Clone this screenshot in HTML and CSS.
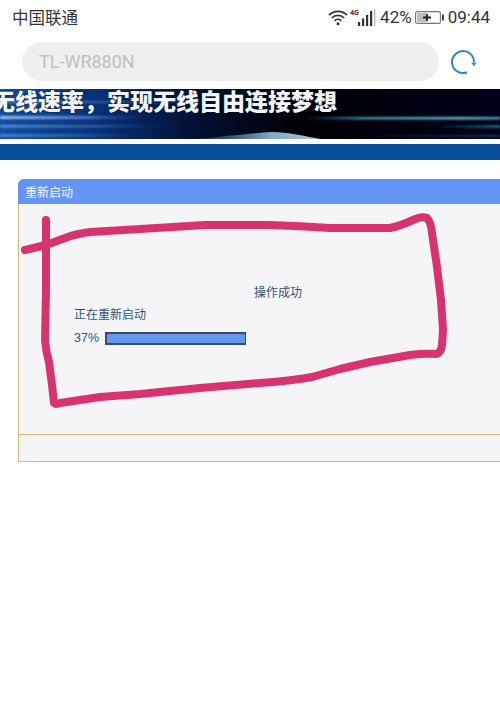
FILE: index.html

```html
<!DOCTYPE html>
<html lang="zh-CN">
<head>
  <meta charset="UTF-8" />
  <meta name="viewport" content="width=device-width, initial-scale=1.0"/>
  <title>重新启动</title>
  <link rel="stylesheet" href="styles.css">
</head>
<body>
  <div class="status-bar">
    <span class="carrier">中国联通</span>
    <div class="status-right">
      <svg class="wifi" width="20" height="17" viewBox="0 0 20 17" fill="none" stroke="#333" stroke-width="1.7">
        <path d="M1 6.2C6 1.2 14 1.2 19 6.2"/>
        <path d="M3.8 9C7.3 5.6 12.7 5.6 16.2 9"/>
        <path d="M6.6 11.8C8.5 10 11.5 10 13.4 11.8"/>
        <circle cx="10" cy="14.8" r="1.5" fill="#333" stroke="none"/>
      </svg>
      <svg class="signal" width="26" height="19" viewBox="0 0 26 19">
        <text x="0" y="6.5" class="signal-label">4G</text>
        <rect x="8" y="14" width="2.2" height="4" fill="#333"/>
        <rect x="12" y="10.5" width="2.2" height="7.5" fill="#333"/>
        <rect x="16" y="7" width="2.2" height="11" fill="#333"/>
        <rect x="20" y="3" width="2.2" height="15" fill="#333"/>
        <rect x="24" y="1" width="1.4" height="17" fill="#bbb"/>
      </svg>
      <span class="percent">42%</span>
      <svg class="battery" width="29" height="15" viewBox="0 0 29 15">
        <rect x="0.6" y="1.6" width="24.8" height="11.8" rx="1.5" fill="#fff" stroke="#777" stroke-width="1.1"/>
        <rect x="2" y="3" width="10" height="9" fill="#bdbdbd"/>
        <path d="M8 7.5H16M12 4V11" stroke="#222" stroke-width="1.8"/>
        <rect x="27" y="4.5" width="1.8" height="6" fill="#333"/>
      </svg>
      <span class="clock">09:44</span>
    </div>
  </div>

  <div class="address-row">
    <div class="address-box">TL-WR880N</div>
    <svg class="reload" width="28" height="28" viewBox="0 0 28 28" fill="none">
      <path d="M18 24.3A11 11 0 1 1 25 14" stroke="#2f86c8" stroke-width="2"/>
      <path d="M22.4 14.4H27.4L24.8 18.6Z" fill="#2f86c8"/>
    </svg>
  </div>

  <div class="banner">
    <svg class="banner-art" width="500" height="50" viewBox="0 0 500 50" preserveAspectRatio="none">
      <defs>
        <linearGradient id="banner-bg" x1="0" x2="1" y1="0" y2="0">
          <stop offset="0" stop-color="#0d4ea6"/>
          <stop offset="0.2" stop-color="#072f74"/>
          <stop offset="0.4" stop-color="#020f30"/>
          <stop offset="0.6" stop-color="#000006"/>
          <stop offset="1" stop-color="#00001a"/>
        </linearGradient>
        <linearGradient id="streak-left" x1="0" x2="1" y1="0" y2="0">
          <stop offset="0" stop-color="#a4c6ee"/>
          <stop offset="0.6" stop-color="#3f78c4"/>
          <stop offset="1" stop-color="#0a2a66" stop-opacity="0"/>
        </linearGradient>
        <linearGradient id="streak-right" x1="0" x2="1" y1="0" y2="0">
          <stop offset="0" stop-color="#1d5a78" stop-opacity="0"/>
          <stop offset="0.3" stop-color="#3f93ae"/>
          <stop offset="0.8" stop-color="#6fc6dc"/>
          <stop offset="1" stop-color="#4ea6c0"/>
        </linearGradient>
        <linearGradient id="streak-dim" x1="0" x2="1" y1="0" y2="0">
          <stop offset="0" stop-color="#17505f" stop-opacity="0"/>
          <stop offset="1" stop-color="#1e6a7c"/>
        </linearGradient>
        <linearGradient id="mound" x1="0" x2="1" y1="0" y2="0">
          <stop offset="0" stop-color="#4d7f9c" stop-opacity="0.15"/>
          <stop offset="0.6" stop-color="#7fa9c0"/>
          <stop offset="1" stop-color="#a8c8d8"/>
        </linearGradient>
        <filter id="soft"><feGaussianBlur stdDeviation="1.1"/></filter>
      </defs>
      <rect width="500" height="50" fill="url(#banner-bg)"/>
      <g filter="url(#soft)">
        <rect x="0" y="12" width="240" height="2" fill="url(#streak-left)" opacity="0.5"/>
        <rect x="0" y="27" width="150" height="3" fill="url(#streak-left)"/>
        <rect x="0" y="36" width="175" height="2.5" fill="url(#streak-left)" opacity="0.6"/>
        <rect x="0" y="45" width="150" height="3" fill="url(#streak-left)" opacity="0.45"/>
        <rect x="300" y="28" width="200" height="2.4" fill="url(#streak-right)"/>
        <rect x="430" y="36" width="70" height="3" fill="url(#streak-dim)"/>
        <rect x="340" y="46" width="160" height="2" fill="url(#streak-dim)" opacity="0.6"/>
      </g>
      <path d="M195 50C225 47 255 44 272 43C288 43 305 47 320 50Z" fill="url(#mound)"/>
    </svg>
    <div class="banner-text">无线速率，实现无线自由连接梦想</div>
  </div>
  <div class="nav-bar"></div>

  <div class="panel">
    <div class="panel-title">重新启动</div>
    <div class="panel-body">
      <p class="success-msg">操作成功</p>
      <p class="restart-msg">正在重新启动</p>
      <div class="progress-row">
        <span class="progress-num">37%</span>
        <div class="progress-bar"></div>
      </div>
    </div>
    <div class="panel-foot"></div>
  </div>

  <svg class="pen-mark" width="500" height="711" viewBox="0 0 500 711" fill="none">
    <path d="M46 220L46 245L46 290L45 340Q46 352 49 362L52 385L54 403Q56 405 60 403L100 397L140 394L200 388L260 383L273 382Q295 380 312 377L340 369L370 362L410 355Q425 353 437 354Q441 352 442 345L443 330L441 300L437 267L432 233Q431 222 427 218Q422 216 413 220Q400 226 390 228L330 228Q300 226 270 225L205 225L140 229L90 232Q75 234 65 238L46 245L25 250" stroke="#d8336f" stroke-width="8" stroke-linecap="round" stroke-linejoin="round"/>
  </svg>
</body>
</html>
```

FILE: styles.css

```css
html, body {
  margin: 0;
  padding: 0;
}
body {
  width: 500px;
  height: 711px;
  overflow: hidden;
  background-color: #fff;
  font-family: "Roboto", "Noto Sans CJK SC", sans-serif;
  position: relative;
}
.status-bar {
  height: 33px;
  padding: 1px 10px 0 12px;
  display: flex;
  align-items: center;
  justify-content: space-between;
  color: #333;
  box-sizing: border-box;
}
.carrier {
  font-size: 16.5px;
}
.status-right {
  display: flex;
  align-items: center;
}
.wifi {
  margin-right: 2px;
}
.signal {
  margin-right: 4px;
}
.signal-label {
  font-size: 7px;
  font-weight: bold;
  fill: #333;
}
.percent {
  font-size: 17px;
  margin-right: 3px;
}
.battery {
  margin-right: 4px;
}
.clock {
  font-size: 17px;
}
.address-row {
  height: 56px;
  padding: 9px 22px 0;
  display: flex;
  align-items: flex-start;
  box-sizing: border-box;
}
.address-box {
  width: 417px;
  height: 39px;
  line-height: 40px;
  padding-left: 17px;
  box-sizing: border-box;
  background-color: #efefef;
  border-radius: 20px;
  color: #c0c0c0;
  font-size: 18px;
  flex-shrink: 0;
}
.reload {
  margin: 6px 0 0 10px;
  flex-shrink: 0;
}
.banner {
  height: 50px;
  position: relative;
  overflow: hidden;
  background-color: #000;
}
.banner-art {
  display: block;
}
.banner-text {
  position: absolute;
  left: -8px;
  top: -1px;
  white-space: nowrap;
  font-family: "Noto Sans CJK SC", sans-serif;
  font-size: 23px;
  line-height: 25px;
  font-weight: 900;
  color: #f4f4f4;
  text-shadow: 0 0 2px #001030;
}
.nav-bar {
  height: 16px;
  margin-top: 5px;
  background-color: #0a4f9e;
}
.panel {
  margin: 19px 0 0 18px;
  border-bottom: 1px solid #d9b978;
  border-left: 1px solid #d9b978;
  border-top-left-radius: 6px;
}
.panel-title {
  height: 25px;
  line-height: 25px;
  margin-left: -1px;
  padding-left: 7px;
  background-color: #6495f5;
  border-top-left-radius: 6px;
  color: #f4f7ff;
  font-family: "Noto Sans CJK SC", sans-serif;
  font-size: 12px;
}
.panel-body {
  height: 231px;
  padding: 80px 0 0 55px;
  box-sizing: border-box;
  background-color: #f5f5f8;
  border-bottom: 1px solid #d9b978;
  color: #34507a;
  font-family: "Noto Sans CJK SC", sans-serif;
  font-size: 12px;
}
.success-msg {
  margin: 0 0 0 180px;
  line-height: 16px;
}
.restart-msg {
  margin: 6px 0 0;
  line-height: 16px;
}
.progress-row {
  margin-top: 9px;
  display: flex;
  align-items: center;
}
.progress-num {
  width: 31px;
  font-family: "Liberation Sans", sans-serif;
  font-size: 12.5px;
}
.progress-bar {
  width: 138px;
  height: 9px;
  background-color: #6495f0;
  border: 2px solid #3a4c6c;
  border-width: 2px 1px 2px 2px;
}
.panel-foot {
  height: 26px;
  background-color: #f5f5f8;
}
.pen-mark {
  position: absolute;
  left: 0;
  top: 0;
}
```
